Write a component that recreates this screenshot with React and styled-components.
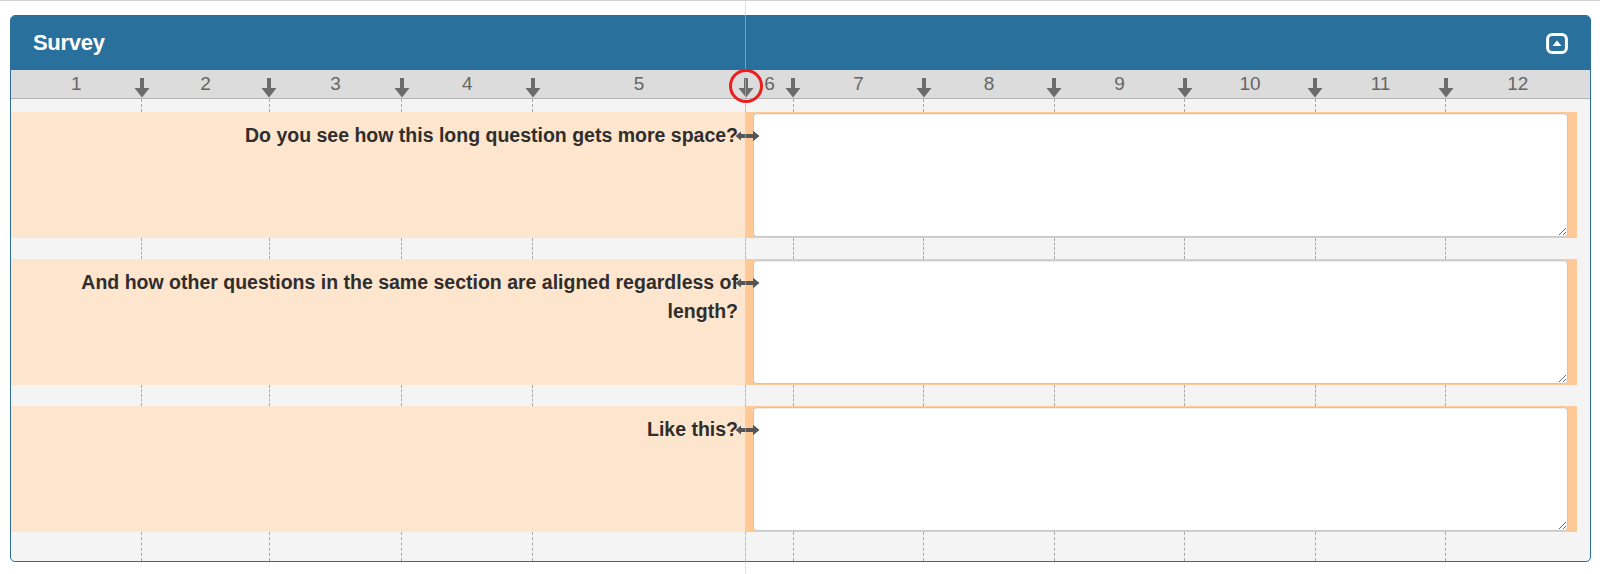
import React from "react";
import styled, { createGlobalStyle } from "styled-components";

const COLS =
  "130.7px 127.6px 132.7px 130.7px 213px 47.6px 130.5px 130.5px 130.5px 130.5px 130.5px 1fr";

const columns = ["1", "2", "3", "4", "5", "6", "7", "8", "9", "10", "11", "12"];

const questions = [
  "Do you see how this long question gets more space?",
  "And how other questions in the same section are aligned regardless of length?",
  "Like this?",
];

const GlobalStyle = createGlobalStyle`
  body {
    margin: 0;
    background: #ffffff;
    font-family: "Liberation Sans", Arial, Helvetica, sans-serif;
  }
`;

const Page = styled.div`
  position: relative;
  height: 574px;
  box-sizing: border-box;
  border-top: 1px solid #d2d2d2;
  padding: 14px 9px 0 10px;
  overflow: hidden;
`;

const Panel = styled.section`
  border: 1px solid #2a6f9b;
  border-radius: 5px;
  overflow: hidden;
  background: #f4f4f4;
`;

const Header = styled.header`
  height: 54px;
  display: flex;
  align-items: center;
  justify-content: space-between;
  padding: 0 22px 0 22px;
  background: #29709c;
`;

const Title = styled.h2`
  margin: 0;
  color: #ffffff;
  font-size: 22px;
  font-weight: bold;
  letter-spacing: -0.3px;
`;

const Ruler = styled.div`
  display: grid;
  grid-template-columns: ${COLS};
  height: 28px;
  background: #dcdcdc;
  border-bottom: 1px solid #b4b4b4;
`;

const RulerCell = styled.div`
  position: relative;
  display: flex;
  align-items: center;
  justify-content: center;
  color: #666666;
  font-size: 19px;
  padding-bottom: 1px;
`;

const Marker = styled.svg`
  position: absolute;
  right: -8px;
  top: 8px;
`;

const Band = styled.div`
  display: grid;
  grid-template-columns: ${COLS};
  height: ${({ $h }) => $h}px;
`;

const BandCell = styled.div`
  border-right: ${({ $last }) => ($last ? "none" : "1px dashed #a9a9a9")};
  margin-right: ${({ $last }) => ($last ? "0" : "-0.5px")};
`;

const Row = styled.div`
  display: grid;
  grid-template-columns: 735px 831px 1fr;
  height: 126px;
`;

const Label = styled.div`
  position: relative;
  background: #fee5cd;
  padding: 9px 8px 0 15px;
  text-align: right;
  color: #2e2e2e;
  font-size: 19.5px;
  font-weight: bold;
  line-height: 29px;
`;

const LinkIcon = styled.svg`
  position: absolute;
  right: -14px;
  top: 18px;
`;

const Field = styled.div`
  display: flex;
  background: #ffc997;
  padding: 1px 9px 1px 7px;
`;

const TextArea = styled.textarea`
  flex: 1;
  height: 124px;
  box-sizing: border-box;
  border: 1px solid #c8c8c8;
  border-radius: 4px;
  background: #ffffff;
  box-shadow: inset 0 1px 1px rgba(0, 0, 0, 0.075);
  resize: vertical;
  outline: none;
`;

const GuideLine = styled.div`
  position: absolute;
  left: 745px;
  top: 0;
  width: 1px;
  height: 574px;
  background: rgba(255, 186, 125, 0.55);
  pointer-events: none;
`;

const Highlight = styled.div`
  position: absolute;
  left: 729px;
  top: 68px;
  width: 34px;
  height: 34px;
  box-sizing: border-box;
  border: 3px solid #ee1c1c;
  border-radius: 50%;
  pointer-events: none;
`;

const DownArrow = () => (
  <Marker width="16" height="20" viewBox="0 0 16 20">
    <path d="M6 0h4v10h5.5L8 19.5 0.5 10H6z" fill="#6b6b6b" />
  </Marker>
);

const CollapseIcon = () => (
  <svg width="22" height="21" viewBox="0 0 22 21">
    <rect x="1.6" y="1.6" width="18.8" height="17.8" rx="4.5" fill="none" stroke="#fff" strokeWidth="3" />
    <path d="M6.5 13h9l-4.5-5.5z" fill="#fff" />
  </svg>
);

const SpreadIcon = () => (
  <LinkIcon width="25" height="12" viewBox="0 0 25 12">
    <path d="M0.5 6L6 1.5v2.5h12V0.8L24.5 6 18 11.2V8H6v2.5z" fill="#555555" />
  </LinkIcon>
);

const GuideBand = ({ h }) => (
  <Band $h={h}>
    {columns.map((c, i) => (
      <BandCell key={c} $last={i === columns.length - 1} />
    ))}
  </Band>
);

export default function App() {
  return (
    <>
      <GlobalStyle />
      <Page>
        <Panel>
          <Header>
            <Title>Survey</Title>
            <CollapseIcon />
          </Header>
          <Ruler>
            {columns.map((c, i) => (
              <RulerCell key={c}>
                {c}
                {i < columns.length - 1 && <DownArrow />}
              </RulerCell>
            ))}
          </Ruler>
          <GuideBand h={13} />
          {questions.map((q, i) => (
            <React.Fragment key={q}>
              <Row>
                <Label>
                  {q}
                  <SpreadIcon />
                </Label>
                <Field>
                  <TextArea />
                </Field>
              </Row>
              <GuideBand h={i === questions.length - 1 ? 29 : 21} />
            </React.Fragment>
          ))}
        </Panel>
        <GuideLine />
        <Highlight />
      </Page>
    </>
  );
}
